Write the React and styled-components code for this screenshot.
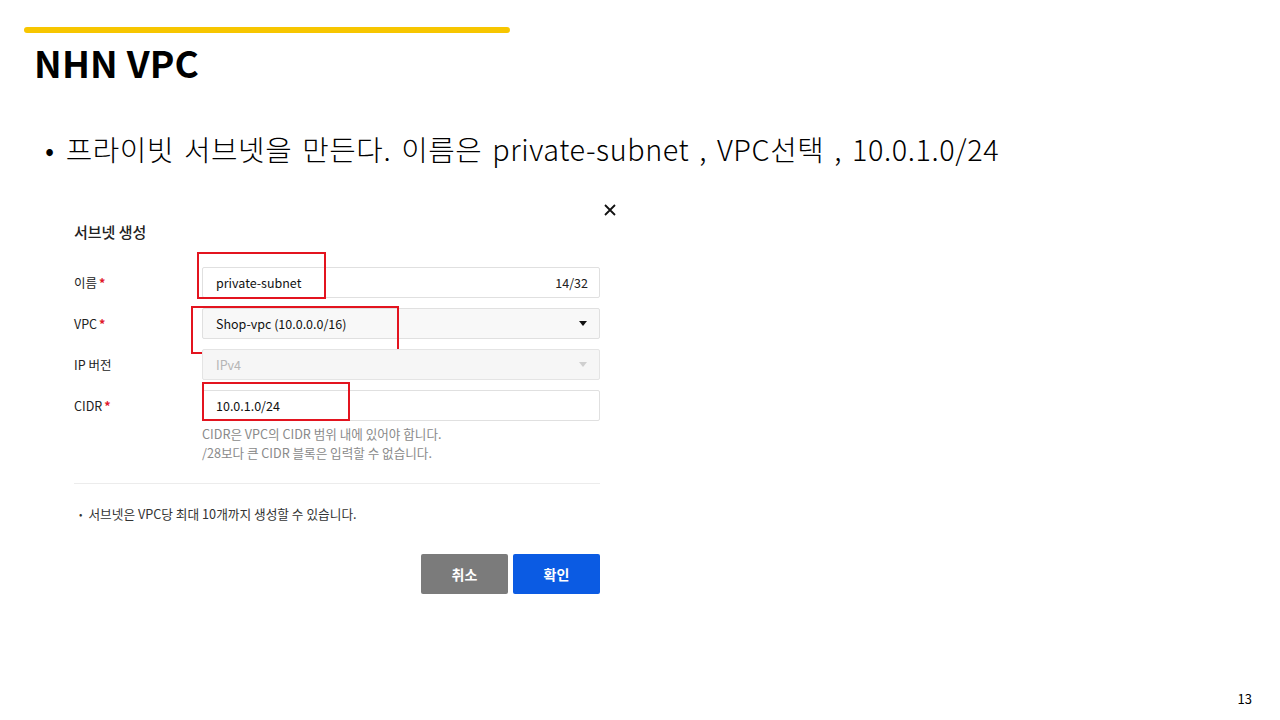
import React from 'react';
import styled, { createGlobalStyle } from 'styled-components';

const GlobalStyle = createGlobalStyle`
  html, body {
    margin: 0;
    padding: 0;
    background: #ffffff;
  }
  body {
    font-family: 'Noto Sans CJK KR', 'Noto Sans', sans-serif;
    color: #000;
  }
`;

const Slide = styled.div`
  position: relative;
  width: 1280px;
  height: 720px;
  overflow: hidden;
  background: #fff;
  padding: 27px 0 0 24px;
  box-sizing: border-box;
`;

const AccentBar = styled.div`
  width: 486px;
  height: 6px;
  border-radius: 3px;
  background: #f7c600;
`;

const Title = styled.h1`
  margin: 4px 0 0 10px;
  font-family: 'Noto Sans CJK KR', sans-serif;
  font-weight: 700;
  font-size: 37px;
  line-height: 50px;
  letter-spacing: 0.2px;
`;

const Bullet = styled.p`
  margin: 44px 0 0 21px;
  display: flex;
  align-items: center;
  font-family: 'Noto Sans CJK KR', sans-serif;
  font-weight: 300;
  font-size: 28.8px;
  line-height: 36px;
  letter-spacing: 0.58px;
  word-spacing: 3px;
  white-space: nowrap;

  &::before {
    content: '•';
    margin-right: 11px;
  }
`;

const Dialog = styled.div`
  width: 545px;
  margin: 36px 0 0 50px;
  font-family: 'Noto Sans CJK KR', sans-serif;
`;

const CloseRow = styled.div`
  display: flex;
  justify-content: flex-end;
  height: 18px;
  color: #111;
`;

const DialogTitle = styled.div`
  font-size: 15px;
  font-weight: 500;
  color: #222;
  margin-top: 1px;
  line-height: 20px;
`;

const Form = styled.div`
  width: 526px;
  margin-top: 25px;
  display: grid;
  grid-template-columns: 128px 398px;
  row-gap: 10px;
`;

const Label = styled.div`
  display: flex;
  align-items: center;
  height: 31px;
  font-size: 12.5px;
  color: #222;
`;

const Req = styled.span`
  color: #e0192c;
  font-weight: 700;
  margin-left: 2px;
`;

const FieldWrap = styled.div`
  position: relative;
`;

const Field = styled.div`
  display: flex;
  align-items: center;
  justify-content: space-between;
  height: 31px;
  box-sizing: border-box;
  padding: 0 11px 0 13px;
  border: 1px solid ${(p) => (p.$disabled ? '#e4e4e4' : '#e0e0e0')};
  background: ${(p) => (p.$bg || '#fff')};
  border-radius: 2px;
  font-size: 12.5px;
  color: ${(p) => (p.$disabled ? '#b5b5b5' : '#111')};
`;

const Counter = styled.span`
  font-size: 12.5px;
  color: #222;
`;

const Caret = styled.span`
  width: 0;
  height: 0;
  border-left: 4px solid transparent;
  border-right: 4px solid transparent;
  border-top: 5px solid ${(p) => (p.$muted ? '#cfcfcf' : '#111')};
  margin-right: 1px;
`;

const Highlight = styled.div`
  position: absolute;
  border: 2.5px solid #e3141f;
  box-sizing: border-box;
  pointer-events: none;
`;

const Help = styled.div`
  grid-column: 2;
  margin-top: -7px;
  font-size: 12.6px;
  line-height: 19px;
  color: #8a8a8a;
`;

const Divider = styled.div`
  width: 526px;
  height: 1px;
  background: #ececec;
  margin-top: 21px;
`;

const Note = styled.div`
  margin: 20px 0 0 5px;
  font-size: 12.7px;
  color: #333;
  display: flex;
  align-items: center;

  &::before {
    content: '•';
    margin-right: 6px;
    font-size: 10px;
  }
`;

const Actions = styled.div`
  width: 526px;
  display: flex;
  justify-content: flex-end;
  gap: 5px;
  margin-top: 31px;
`;

const Button = styled.button`
  width: 87px;
  height: 40px;
  border: none;
  border-radius: 2px;
  background: ${(p) => (p.$primary ? '#0b5be3' : '#7b7b7b')};
  color: #fff;
  font-family: 'Noto Sans CJK KR', sans-serif;
  font-size: 14px;
  font-weight: 700;
  cursor: pointer;
`;

const PageNum = styled.div`
  position: absolute;
  right: 28px;
  bottom: 12px;
  font-family: 'Noto Sans CJK KR', sans-serif;
  font-size: 13px;
`;

const CloseIcon = () => (
  <svg width="14" height="14" viewBox="0 0 14 14" style={{ marginRight: 2 }}>
    <path d="M2 2 L12 12 M12 2 L2 12" stroke="#111" strokeWidth="1.8" fill="none" />
  </svg>
);

const App = () => {
  return (
    <>
      <GlobalStyle />
      <Slide>
        <AccentBar />
        <Title>NHN VPC</Title>
        <Bullet>프라이빗 서브넷을 만든다. 이름은 private-subnet , VPC선택 , 10.0.1.0/24</Bullet>

        <Dialog>
          <CloseRow>
            <CloseIcon />
          </CloseRow>
          <DialogTitle>서브넷 생성</DialogTitle>

          <Form>
            <Label>
              이름<Req>*</Req>
            </Label>
            <FieldWrap>
              <Field>
                <span>private-subnet</span>
                <Counter>14/32</Counter>
              </Field>
              <Highlight style={{ left: -5, top: -15, width: 129, height: 47 }} />
            </FieldWrap>

            <Label>
              VPC<Req>*</Req>
            </Label>
            <FieldWrap>
              <Field $bg="#f8f8f8">
                <span>Shop-vpc (10.0.0.0/16)</span>
                <Caret />
              </Field>
              <Highlight style={{ left: -11, top: -2, width: 208, height: 48 }} />
            </FieldWrap>

            <Label>IP 버전</Label>
            <FieldWrap>
              <Field $bg="#f6f6f6" $disabled>
                <span>IPv4</span>
                <Caret $muted />
              </Field>
            </FieldWrap>

            <Label>
              CIDR<Req>*</Req>
            </Label>
            <FieldWrap>
              <Field>
                <span>10.0.1.0/24</span>
              </Field>
              <Highlight style={{ left: 0, top: -8, width: 148, height: 39 }} />
            </FieldWrap>

            <Help>
              CIDR은 VPC의 CIDR 범위 내에 있어야 합니다.
              <br />
              /28보다 큰 CIDR 블록은 입력할 수 없습니다.
            </Help>
          </Form>

          <Divider />
          <Note>서브넷은 VPC당 최대 10개까지 생성할 수 있습니다.</Note>

          <Actions>
            <Button>취소</Button>
            <Button $primary>확인</Button>
          </Actions>
        </Dialog>

        <PageNum>13</PageNum>
      </Slide>
    </>
  );
};

export default App;
